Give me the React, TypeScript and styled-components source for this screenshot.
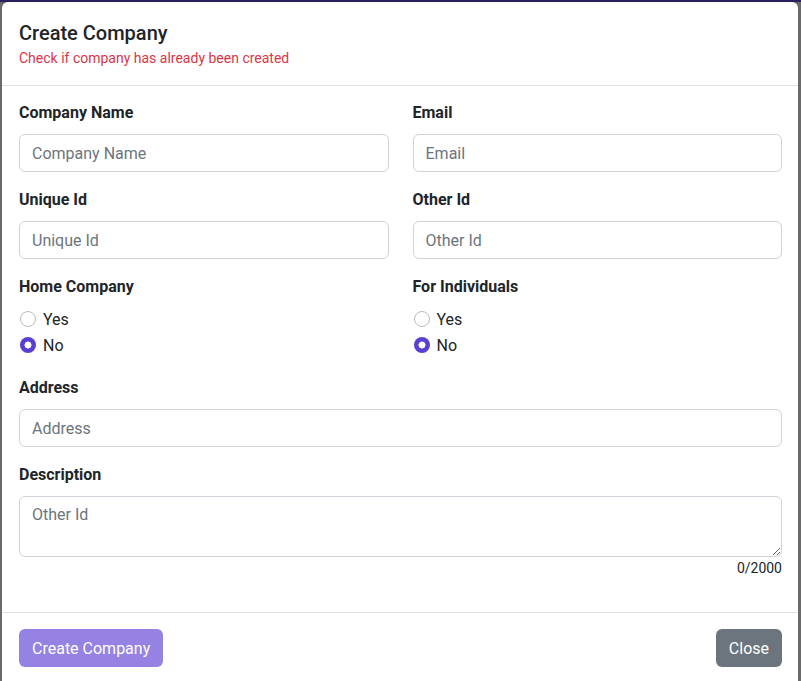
import React from "react";
import styled, { createGlobalStyle } from "styled-components";

const Global = createGlobalStyle`
  html, body { margin: 0; padding: 0; }
  body {
    background: linear-gradient(#2b1f5e 0 2px, #6a6a6a 2px);
    font-family: Roboto, "Liberation Sans", Arial, sans-serif;
    color: #212529;
    height: 681px;
    overflow: hidden;
  }
  * { box-sizing: border-box; }
`;

const Modal = styled.div`
  margin: 2px 0 0 2px;
  width: 796px;
  height: 679px;
  background: #fff;
  border-radius: 6px 6px 0 0;
  display: flex;
  flex-direction: column;
`;

const Header = styled.div`
  padding: 19px 16px 16px 17px;
  border-bottom: 1px solid #dee2e6;
`;

const Title = styled.h5`
  margin: 0;
  font-size: 20px;
  font-weight: 500;
  line-height: 24px;
  color: #212529;
`;

const Subtitle = styled.div`
  margin-top: 3px;
  font-size: 14px;
  line-height: 21px;
  color: #dc3545;
`;

const Body = styled.div`
  padding: 15px 16px 0 17px;
  flex: 1;
`;

const Grid = styled.div`
  display: grid;
  grid-template-columns: 1fr 1fr;
  column-gap: 24px;
`;

const Field = styled.div<{ $mb?: number }>`
  margin-bottom: ${(p) => p.$mb ?? 16}px;
`;

const Label = styled.label`
  display: block;
  font-size: 16px;
  font-weight: 700;
  line-height: 24px;
  margin-bottom: 9px;
  color: #212529;
`;

const Input = styled.input`
  display: block;
  width: 100%;
  height: 38px;
  padding: 6px 12px;
  font-family: inherit;
  font-size: 16px;
  color: #212529;
  border: 1px solid #ced4da;
  border-radius: 6px;
  background: #fff;
  outline: none;
  &::placeholder { color: #6c757d; }
`;

const TextArea = styled.textarea`
  display: block;
  width: 100%;
  height: 61px;
  padding: 6px 12px;
  font-family: inherit;
  font-size: 16px;
  line-height: 24px;
  color: #212529;
  border: 1px solid #ced4da;
  border-radius: 6px;
  outline: none;
  resize: vertical;
  &::placeholder { color: #6c757d; }
`;

const Counter = styled.div`
  text-align: right;
  font-size: 14px;
  line-height: 20px;
  color: #212529;
  margin-top: 1px;
`;

const RadioRow = styled.label`
  display: flex;
  align-items: center;
  gap: 7px;
  height: 26px;
  font-size: 16px;
  color: #212529;
  padding-left: 1px;
`;

const RadioDot = styled.span<{ $checked?: boolean }>`
  width: 16px;
  height: 16px;
  border-radius: 50%;
  flex: none;
  border: ${(p) => (p.$checked ? "none" : "1px solid #b8bcc2")};
  background: ${(p) =>
    p.$checked
      ? "radial-gradient(circle, #fff 0 3.2px, #5b3fd3 3.8px)"
      : "#fff"};
`;

const RadioLabel = styled.span`
  display: block;
  font-size: 16px;
  font-weight: 700;
  line-height: 24px;
  margin-bottom: 7px;
`;

const Footer = styled.div`
  border-top: 1px solid #dee2e6;
  padding: 16px 16px 14px 17px;
  display: flex;
  justify-content: space-between;
  align-items: center;
`;

const Button = styled.button<{ $variant: "primary" | "secondary" }>`
  height: 38px;
  padding: 0 13px;
  border: none;
  border-radius: 6px;
  font-family: inherit;
  font-size: 16px;
  color: #fff;
  background: ${(p) => (p.$variant === "primary" ? "#9582e2" : "#6c757d")};
`;

function Radio({ label, checked }: { label: string; checked?: boolean }) {
  return (
    <RadioRow>
      <RadioDot $checked={checked} />
      {label}
    </RadioRow>
  );
}

export default function App() {
  return (
    <>
      <Global />
      <Modal>
        <Header>
          <Title>Create Company</Title>
          <Subtitle>Check if company has already been created</Subtitle>
        </Header>
        <Body>
          <Grid>
            <Field>
              <Label>Company Name</Label>
              <Input placeholder="Company Name" />
            </Field>
            <Field>
              <Label>Email</Label>
              <Input placeholder="Email" />
            </Field>
            <Field>
              <Label>Unique Id</Label>
              <Input placeholder="Unique Id" />
            </Field>
            <Field>
              <Label>Other Id</Label>
              <Input placeholder="Other Id" />
            </Field>
            <Field $mb={18}>
              <RadioLabel>Home Company</RadioLabel>
              <Radio label="Yes" />
              <Radio label="No" checked />
            </Field>
            <Field $mb={18}>
              <RadioLabel>For Individuals</RadioLabel>
              <Radio label="Yes" />
              <Radio label="No" checked />
            </Field>
          </Grid>
          <Field>
            <Label>Address</Label>
            <Input placeholder="Address" />
          </Field>
          <Field $mb={0}>
            <Label>Description</Label>
            <TextArea placeholder="Other Id" />
            <Counter>0/2000</Counter>
          </Field>
        </Body>
        <Footer>
          <Button $variant="primary">Create Company</Button>
          <Button $variant="secondary">Close</Button>
        </Footer>
      </Modal>
    </>
  );
}
